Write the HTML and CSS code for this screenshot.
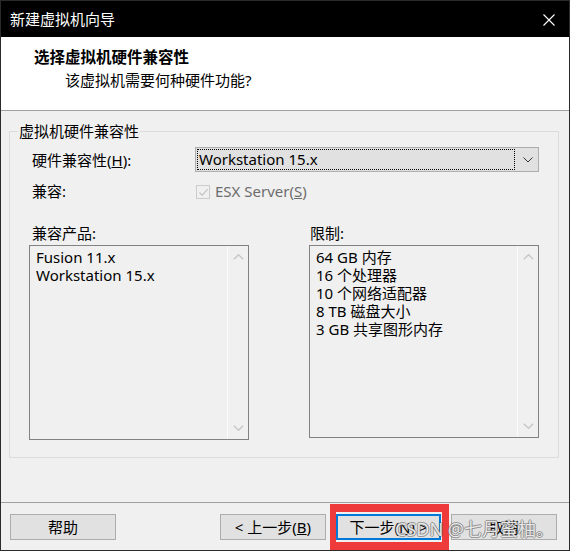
FILE: index.html
```html
<!DOCTYPE html>
<html lang="zh-CN">
<head>
<meta charset="utf-8">
<title>新建虚拟机向导</title>
<link rel="stylesheet" href="styles.css">
</head>
<body>
<div class="window">
  <div class="titlebar">
    <span class="title">新建虚拟机向导</span>
    <svg class="close" width="12" height="12" viewBox="0 0 12 12"><path d="M0.5 0.5 L11.5 11.5 M11.5 0.5 L0.5 11.5" stroke="#fff" stroke-width="1.1" fill="none"/></svg>
  </div>
  <div class="header">
    <div class="heading">选择虚拟机硬件兼容性</div>
    <div class="subtitle">该虚拟机需要何种硬件功能?</div>
  </div>
  <div class="main">
    <fieldset class="group">
      <legend>虚拟机硬件兼容性</legend>
      <div class="row row-combo">
        <span class="label">硬件兼容性(<u>H</u>):</span>
        <div class="combo">
          <span class="combo-focus">Workstation 15.x</span>
          <svg class="combo-arrow" width="10" height="6" viewBox="0 0 10 6"><path d="M0.5 0.5 L5 5 L9.5 0.5" stroke="#333" stroke-width="1" fill="none"/></svg>
        </div>
      </div>
      <div class="row row-check">
        <span class="label">兼容:</span>
        <div class="check">
          <span class="box"><svg width="11" height="11" viewBox="0 0 11 11"><path d="M1.5 5.5 L4.2 8.2 L9.7 2.2" stroke="#c4c4c4" stroke-width="1.2" fill="none"/></svg></span>
          <span class="check-text">ESX Server(<u>S</u>)</span>
        </div>
      </div>
      <div class="row row-lists">
        <div class="col col-left">
          <span class="label">兼容产品:</span>
          <div class="listbox lb-left">
            <div class="items">
              <div>Fusion 11.x</div>
              <div>Workstation 15.x</div>
            </div>
            <div class="scroll">
              <svg width="11" height="6" viewBox="0 0 11 6"><path d="M0.8 5.3 L5.5 0.8 L10.2 5.3" stroke="#c6c6c6" stroke-width="1.4" fill="none"/></svg>
              <svg width="11" height="6" viewBox="0 0 11 6"><path d="M0.8 0.7 L5.5 5.2 L10.2 0.7" stroke="#c6c6c6" stroke-width="1.4" fill="none"/></svg>
            </div>
          </div>
        </div>
        <div class="col col-right">
          <span class="label">限制:</span>
          <div class="listbox lb-right">
            <div class="items">
              <div>64 GB 内存</div>
              <div>16 个处理器</div>
              <div>10 个网络适配器</div>
              <div>8 TB 磁盘大小</div>
              <div>3 GB 共享图形内存</div>
            </div>
            <div class="scroll">
              <svg width="11" height="6" viewBox="0 0 11 6"><path d="M0.8 5.3 L5.5 0.8 L10.2 5.3" stroke="#c6c6c6" stroke-width="1.4" fill="none"/></svg>
              <svg width="11" height="6" viewBox="0 0 11 6"><path d="M0.8 0.7 L5.5 5.2 L10.2 0.7" stroke="#c6c6c6" stroke-width="1.4" fill="none"/></svg>
            </div>
          </div>
        </div>
      </div>
    </fieldset>
  </div>
  <div class="footer">
    <button class="btn btn-help">帮助</button>
    <div class="nav">
      <button class="btn">&lt; 上一步(<u>B</u>)</button>
      <span class="next-wrap"><button class="btn btn-next">下一步(<u>N</u>) &gt;</button></span>
      <button class="btn">取消</button>
    </div>
    <span class="watermark">CSDN @七月蜜柚。</span>
  </div>
</div>
</body>
</html>
```
FILE: styles.css
```css
* { box-sizing: border-box; }
html, body { margin: 0; padding: 0; background: #f0f0f0; }
body {
  font-family: "Segoe UI", "Noto Sans", "Noto Sans CJK SC", sans-serif;
  font-size: 15px;
  color: #000;
}
.window {
  width: 570px;
  height: 551px;
  border: 1px solid #2b2b2b;
  display: flex;
  flex-direction: column;
  background: #f0f0f0;
  overflow: hidden;
}
.titlebar {
  height: 36px;
  background: #000;
  color: #fff;
  display: flex;
  align-items: center;
  justify-content: space-between;
  padding: 0 14px 0 9px;
  flex: none;
}
.title { font-size: 15px; line-height: 20px; }
.close { display: block; margin-top: 1px; }
.header {
  height: 74px;
  background: #fff;
  border-bottom: 1px solid #a0a0a0;
  padding: 10px 0 0 33px;
  flex: none;
}
.heading { font-weight: bold; font-size: 15.5px; line-height: 20px; }
.subtitle { line-height: 20px; margin-top: 3px; padding-left: 31px; }
.main { flex: 1; padding-top: 10px; }
.group {
  margin: 0 0 0 8px;
  width: 550px;
  border: 1px solid #dcdcdc;
  padding: 6px 19px 17px 19px;
  min-width: 0;
}
.group legend {
  padding: 0 1px;
  margin-left: -11px;
  line-height: 20px;
}
.row { display: flex; align-items: center; }
.label { padding-left: 3px; line-height: 20px; }
.row-combo { height: 25px; }
.row-combo .label, .row-check .label { width: 166px; flex: none; }
.combo {
  width: 344px;
  height: 25px;
  background: #e1e1e1;
  border: 1px solid #adadad;
  display: flex;
  align-items: center;
  padding: 1px;
}
.combo-focus {
  height: 21px;
  width: 318px;
  border: 1px dotted #000;
  line-height: 19px;
  padding-left: 1px;
}
.combo-arrow { margin-left: 8px; }
.row-check { margin-top: 9px; height: 20px; }
.check { display: flex; align-items: center; }
.box {
  width: 14px;
  height: 14px;
  border: 1px solid #cccccc;
  background: #f0f0f0;
  display: flex;
  align-items: center;
  justify-content: center;
  margin-left: 1px;
  margin-top: 2px;
}
.box svg { display: block; }
.check-text { margin-left: 5px; color: #6d6d6d; line-height: 20px; }
.row-lists { margin-top: 22px; align-items: flex-start; }
.col { display: flex; flex-direction: column; }
.col .label { margin-bottom: 2px; }
.col-left { width: 220px; }
.col-right { width: 230px; margin-left: 60px; }
.col-right .label { padding-left: 1px; }
.listbox {
  border: 1px solid #828282;
  background: #f0f0f0;
  display: flex;
}
.lb-left { height: 195px; }
.lb-right { height: 193px; }
.items { flex: 1; padding: 2px 0 0 6px; line-height: 18px; }
.scroll {
  width: 21px;
  border-left: 1px solid #fbfbfb;
  display: flex;
  flex-direction: column;
  justify-content: space-between;
  align-items: center;
  padding: 8px 0 8px;
}
.scroll svg { display: block; }
.footer {
  height: 48px;
  border-top: 1px solid #a0a0a0;
  padding: 11px 0 0 9px;
  display: flex;
  align-items: flex-start;
  position: relative;
  flex: none;
}
.btn {
  font: inherit;
  width: 106px;
  height: 26px;
  background: #e1e1e1;
  border: 1px solid #adadad;
  padding: 0;
  line-height: 22px;
  color: #000;
}
.nav { display: flex; margin-left: 104px; gap: 11px; }
.nav .btn:last-child { margin-left: -1px; }
.next-wrap { position: relative; display: block; }
.btn-next { width: 105px; border: 2px solid #0078d7; }
.next-wrap::after {
  content: "";
  position: absolute;
  left: -7px;
  right: -8px;
  top: -10px;
  bottom: -10px;
  border-style: solid;
  border-color: #ee3a3a;
  border-width: 8px 7px 8px 6px;
}
.watermark {
  position: absolute;
  z-index: 5;
  left: 394px;
  top: 15px;
  font-size: 18px;
  line-height: 22px;
  color: rgba(255, 255, 255, 0.85);
  text-shadow: 1px 0 0 rgba(90, 90, 90, 0.55), -1px 0 0 rgba(90, 90, 90, 0.55), 0 1px 0 rgba(90, 90, 90, 0.55), 0 -1px 0 rgba(90, 90, 90, 0.55);
  white-space: nowrap;
  font-family: "Noto Sans", "Noto Sans CJK SC", sans-serif;
}
```
